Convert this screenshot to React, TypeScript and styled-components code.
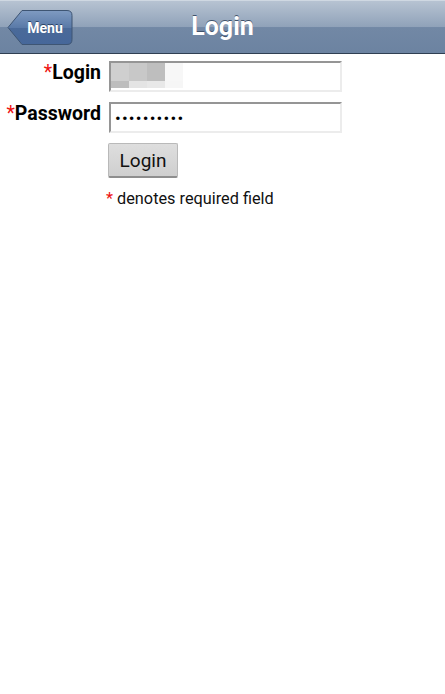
import React from "react";
import styled, { createGlobalStyle } from "styled-components";

const GlobalStyle = createGlobalStyle`
  html, body {
    margin: 0;
    padding: 0;
    background: #ffffff;
    font-family: Roboto, "Noto Sans", "Liberation Sans", sans-serif;
  }
`;

const Page = styled.div`
  width: 445px;
  min-height: 694px;
  background: #ffffff;
`;

const Header = styled.header`
  position: relative;
  display: flex;
  align-items: center;
  justify-content: center;
  height: 54px;
  background: linear-gradient(to bottom, #b7c3d2 0%, #90a2b9 50%, #7288a5 51%, #6c83a1 100%);
  border-top: 1px solid #cfd8e2;
  border-bottom: 1px solid #2f3f52;
  box-sizing: border-box;
`;

const Title = styled.h1`
  margin: 0 0 1px 0;
  font-size: 25px;
  font-weight: 700;
  color: #ffffff;
  text-shadow: 0 -1px 0 #3f526b;
`;

const BackButton = styled.button`
  position: absolute;
  left: 7px;
  top: 8px;
  width: 66px;
  height: 37px;
  padding: 0 0 0 10px;
  border: none;
  background: transparent;
  cursor: pointer;
  display: flex;
  align-items: center;
  justify-content: center;
  font-family: inherit;
  font-size: 14px;
  font-weight: 700;
  color: #ffffff;
  text-shadow: 0 -1px 0 #2c4366;

  & > svg {
    position: absolute;
    left: 0;
    top: 0;
  }

  & > span {
    position: relative;
  }
`;

const Form = styled.form`
  display: grid;
  grid-template-columns: 101px 233px;
  column-gap: 8px;
  row-gap: 10px;
  padding-top: 7px;
  align-items: start;
`;

const Label = styled.label`
  justify-self: end;
  font-size: 19.5px;
  font-weight: 700;
  color: #000000;
  line-height: 24px;
`;

const Star = styled.span`
  color: #ee1111;
  font-weight: 400;
`;

const Field = styled.div`
  position: relative;
`;

const Input = styled.input`
  display: block;
  width: 233px;
  height: 31px;
  box-sizing: border-box;
  margin: 0;
  padding: 0 4px;
  border-style: solid;
  border-width: 2px;
  border-color: #959595 #ececec #ececec #959595;
  background: #ffffff;
  font-family: inherit;
  font-size: 17px;
  color: #000;
  letter-spacing: 1.2px;
  outline: none;
`;

const Blur = styled.span`
  position: absolute;
  left: 2px;
  top: 2px;
  display: grid;
  grid-template-columns: repeat(4, 18px);
  grid-template-rows: 18px 7px;
`;

const Cell = styled.span<{ $c: string }>`
  background: ${(p) => p.$c};
`;

const Actions = styled.div`
  grid-column: 2;
  display: flex;
  flex-direction: column;
  align-items: flex-start;
  gap: 11px;
`;

const SubmitButton = styled.button`
  width: 70px;
  height: 35px;
  margin-left: -1px;
  box-sizing: border-box;
  border: 1px solid #b9b9b9;
  border-bottom: 2px solid #8e8e8e;
  border-radius: 2px;
  background: linear-gradient(to bottom, #dedede, #cfcfcf);
  font-family: inherit;
  font-size: 19px;
  color: #111;
  cursor: pointer;
`;

const Note = styled.p`
  margin: 0 0 0 -3px;
  font-size: 16.3px;
  color: #111;
`;

const blurCells = [
  "#cfcfcf", "#c8c8c8", "#bebebe", "#f7f7f7",
  "#bdbdbd", "#e4e4e4", "#e8e8e8", "#f6f6f6",
];

export default function App() {
  return (
    <Page>
      <GlobalStyle />
      <Header>
        <BackButton type="button">
          <svg width="66" height="37" viewBox="0 0 66 37">
            <defs>
              <linearGradient id="bk" x1="0" y1="0" x2="0" y2="1">
                <stop offset="0" stopColor="#7f9bc2" />
                <stop offset="0.5" stopColor="#5a7aa8" />
                <stop offset="0.51" stopColor="#4a6a99" />
                <stop offset="1" stopColor="#46679a" />
              </linearGradient>
            </defs>
            <path
              d="M1 18.5 L15 1.5 H60 Q65 1.5 65 6.5 V30.5 Q65 35.5 60 35.5 H15 Z"
              fill="url(#bk)"
              stroke="#3e5573"
              strokeWidth="1"
            />
          </svg>
          <span>Menu</span>
        </BackButton>
        <Title>Login</Title>
      </Header>

      <Form onSubmit={(e) => e.preventDefault()}>
        <Label htmlFor="login">
          <Star>*</Star>Login
        </Label>
        <Field>
          <Input id="login" type="text" defaultValue="" />
          <Blur>
            {blurCells.map((c, i) => (
              <Cell key={i} $c={c} />
            ))}
          </Blur>
        </Field>

        <Label htmlFor="password">
          <Star>*</Star>Password
        </Label>
        <Field>
          <Input id="password" type="password" defaultValue="secret1234" />
        </Field>

        <Actions>
          <SubmitButton type="submit">Login</SubmitButton>
          <Note>
            <Star>*</Star> denotes required field
          </Note>
        </Actions>
      </Form>
    </Page>
  );
}
